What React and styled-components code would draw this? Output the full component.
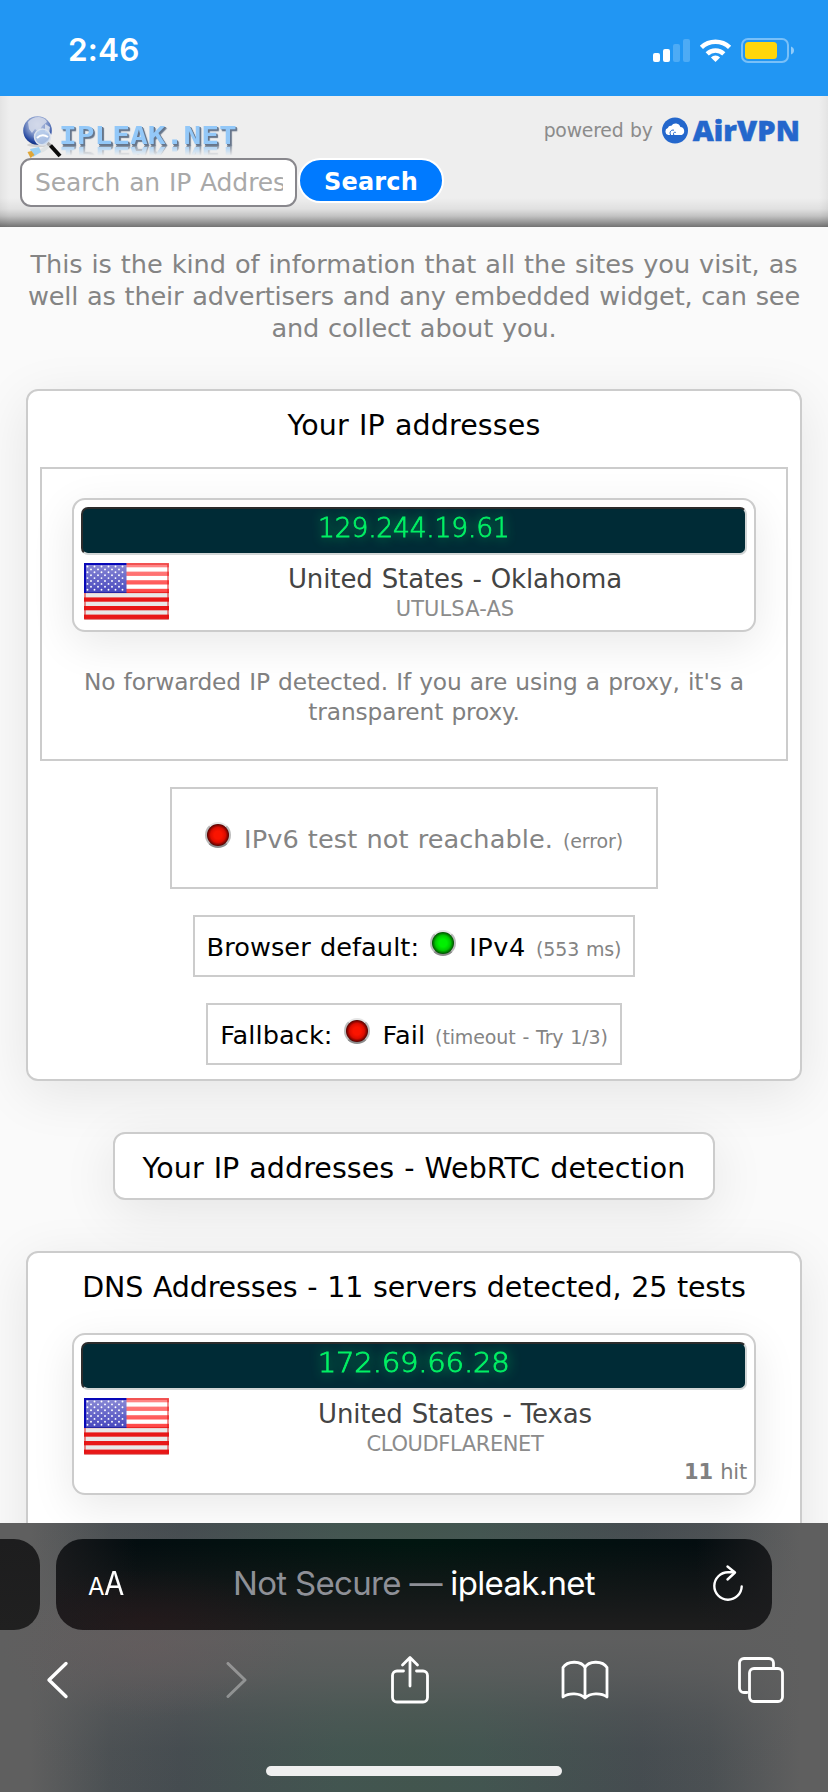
import React from "react";
import styled, { createGlobalStyle } from "styled-components";

const GlobalStyle = createGlobalStyle`
  *, *::before, *::after { box-sizing: border-box; }
  body {
    margin: 0;
    background: #fafafa;
    font-family: Verdana, "DejaVu Sans", sans-serif;
    letter-spacing: -0.2px;
    word-spacing: 0.9px;
  }
`;

const Screen = styled.div`
  width: 828px;
  height: 1792px;
  display: flex;
  flex-direction: column;
  overflow: hidden;
`;

/* Run of text with its own tracking, in px */
const Track = styled.span`
  letter-spacing: ${(p) => p.$by}px;
`;

/* ---------- status bar ---------- */

const StatusBar = styled.div`
  flex: none;
  height: 96px;
  padding: 4px 34px 0 68px;
  display: flex;
  align-items: center;
  justify-content: space-between;
  background: #2196f3;
  color: #fff;
`;

const Clock = styled.span`
  font: 600 31.5px/40px Inter, sans-serif;
  letter-spacing: 0.2px;
`;

const StatusIcons = () => (
  <svg width="142" height="26" viewBox="652 36 142 26" fill="#fff">
    <rect x="653" y="52" width="7" height="9" rx="2" />
    <rect x="663" y="48" width="7" height="13" rx="2" />
    <rect x="673" y="43" width="7" height="18" rx="2" opacity="0.2" />
    <rect x="683" y="38" width="7" height="23" rx="2" opacity="0.2" />
    <path d="M715.500 61l-4.600-4.600a6.600 6.600 0 0 1 9.200 0z" />
    <path d="M707.200 52.800a12 12 0 0 1 16.600 0" fill="none" stroke="#fff" strokeWidth="4.600" />
    <path d="M701.400 46.400a20.400 20.400 0 0 1 28.200 0" fill="none" stroke="#fff" strokeWidth="4.600" />
    <rect x="742" y="38" width="46" height="23" rx="6" fill="none" stroke="#fff" strokeWidth="2" opacity="0.4" />
    <rect x="745" y="41" width="32" height="17" rx="3.500" fill="#ffd60a" />
    <path d="M791 45.500c4 1.200 4 6.800 0 8z" opacity="0.5" />
  </svg>
);

/* ---------- site header ---------- */

const Header = styled.header`
  flex: none;
  height: 131px;
  padding: 19px 28px 0 20px;
  display: flex;
  justify-content: space-between;
  align-items: flex-start;
  background:
    linear-gradient(to top, rgba(0,0,0,.52) 0, rgba(0,0,0,.36) 5px, rgba(0,0,0,.18) 11px, rgba(0,0,0,.06) 18px, transparent 29px),
    linear-gradient(to right, rgba(0,0,0,.045), transparent 9px),
    linear-gradient(to left, rgba(0,0,0,.045), transparent 9px),
    #eee;
`;

const Brand = styled.div`
  display: flex;
  align-items: flex-start;
  height: 43px;
  padding-left: 2px;
`;

const BrandName = styled.span`
  width: 146px;
  height: 32px;
  margin: 5px 0 0 -3px;
  font: 700 24px/32px "DejaVu Sans Mono", monospace;
  letter-spacing: 0;
  white-space: nowrap;
  color: #93c8f8;
  text-shadow: 1px 1px 0 #66758a, 1.5px 2px 1px #66758a;
  transform: scaleX(1.23);
  transform-origin: left top;
  -webkit-box-reflect: below -13px linear-gradient(transparent 48%, rgba(0,0,0,.75) 78%);
`;

const SearchForm = styled.div`
  display: flex;
  align-items: flex-start;
`;

const SearchInput = styled.input`
  width: 277px;
  height: 49px;
  padding: 0 12px 0 13px;
  border: 2px solid #88878c;
  border-radius: 11px;
  background: #fff;
  font: 25px "DejaVu Sans", sans-serif;
  letter-spacing: -0.1px;
  word-spacing: 1px;
  &::placeholder { color: #a9a9a9; opacity: 1; }
`;

const SearchButton = styled.button`
  width: 146px;
  height: 45px;
  margin-left: 1px;
  padding: 2px 0 0;
  border: 2px solid #fff;
  border-radius: 23px;
  background: #007aff;
  color: #fff;
  font: 700 24px/38px "DejaVu Sans", sans-serif;
  letter-spacing: 0.2px;
`;

const Powered = styled.div`
  display: flex;
  align-items: center;
  padding-top: 2px;
  height: 28px;
  color: #8b8b8b;
  font-size: 18.8px;
  svg { margin: 0 5px 0 9px; }
`;

const AirVpn = styled.b`
  color: #2467cc;
  font: 800 29px/28px "Open Sans", sans-serif;
  letter-spacing: 0.1px;
  -webkit-text-stroke: 0.5px #2467cc;
`;

const Globe = () => (
  <svg width="40" height="43" viewBox="22 115 40 43">
    <defs>
      <radialGradient id="globe" cx="0.5" cy="0.3" r="0.72">
        <stop offset="0" stopColor="#c5cfe8" />
        <stop offset="0.5" stopColor="#7e94c8" />
        <stop offset="0.85" stopColor="#1f429c" />
        <stop offset="1" stopColor="#0d2b78" />
      </radialGradient>
    </defs>
    <ellipse cx="39" cy="145" rx="12" ry="2" fill="#000" opacity="0.12" />
    <circle cx="37.500" cy="130.500" r="14.300" fill="url(#globe)" />
    <path d="M28 122q4-5 11-5 7 1 8 5l-5 4-3 6-4-3-3 4-3-4z" fill="#d5daea" opacity="0.85" />
    <path d="M45 124l5 3-1 7-4-2z" fill="#e5e8f0" opacity="0.8" />
    <path d="M34 152q9 0 14-6" stroke="#dfe3e4" strokeWidth="4" fill="none" />
    <path d="M30 149l9-2 2 5-8 5z" fill="#9bd0f3" />
    <path d="M27.500 152l4-1 3 4-4 3z" fill="#dfa637" />
    <circle cx="42.500" cy="137" r="8" fill="#bfd3ee" fillOpacity="0.85" stroke="#dce3ed" strokeWidth="1.500" />
    <path d="M37 138q5-5 11-1" stroke="#fff" strokeWidth="2" fill="none" />
    <path d="M47.500 143l4 3.500" stroke="#aaa" strokeWidth="3" />
    <path d="M50.500 145.500l9.500 10.500" stroke="#0b0b0b" strokeWidth="4" />
  </svg>
);

const CloudBadge = () => (
  <svg width="26" height="27" viewBox="0 0 26 27">
    <circle cx="13" cy="13.500" r="13" fill="#2467cc" />
    <path d="M6.200 18a3.600 3.600 0 0 1-.4-6.900 3.400 3.400 0 0 1 3.600-2.300 5 5 0 0 1 9 1.300 4.100 4.100 0 0 1 1.200 7.900z" fill="#fff" />
    <path d="M8.600 18c-1.600-3 .6-5.600 3.400-4.800M11.800 18c-1-2 .4-3.200 2-2.600" fill="none" stroke="#2467cc" strokeWidth="1" />
  </svg>
);

/* ---------- page ---------- */

const Page = styled.main`
  flex: 1;
  min-height: 0;
  overflow: hidden;
  display: flex;
  flex-direction: column;
  align-items: center;
  background: #fafafa;
`;

const Intro = styled.p`
  flex: none;
  margin: 21px 0 45px;
  font-size: 25.6px;
  line-height: 32px;
  text-align: center;
  white-space: nowrap;
  color: #848484;
`;

const Card = styled.section`
  flex: none;
  width: ${(p) => p.$width || 776}px;
  height: ${(p) => p.$height}px;
  margin-bottom: 51px;
  padding: 18px 12px 0;
  display: flex;
  flex-direction: column;
  align-items: center;
  border: 2px solid #ccc;
  border-radius: 12px;
  background: #fff;
  box-shadow: 0 12px 54px rgba(0, 0, 0, 0.09);
`;

const CardTitle = styled.h2`
  flex: none;
  margin: 0 0 ${(p) => p.$gap || 0}px;
  font-size: 28.5px;
  font-weight: 400;
  line-height: 34px;
  white-space: nowrap;
  color: #000;
`;

const ResultBox = styled.div`
  flex: none;
  width: 748px;
  height: 294px;
  padding-top: 29px;
  display: flex;
  flex-direction: column;
  align-items: center;
  border: 2px solid #ccc;
`;

const AddressCard = styled.article`
  flex: none;
  width: 684px;
  height: ${(p) => p.$height}px;
  padding: 7px;
  border: 2px solid #ccc;
  border-radius: 13px;
  background: #fff;
  box-shadow: 0 12px 44px rgba(0, 0, 0, 0.09);
`;

const AddressBar = styled.div`
  display: flex;
  justify-content: center;
  height: 48px;
  width: 666px;
  border: 2px solid;
  border-color: #2c2c2c #d2d6d6 #d2d6d6 #2c2c2c;
  border-radius: 7px;
  background: #002b36;
`;

const Digits = styled.span`
  color: #00f064;
  font-family: "DejaVu Sans";
  font-weight: 200;
  font-size: 26px;
  line-height: 39px;
  letter-spacing: -0.2px;
  -webkit-text-stroke: 0.8px #00f064;
  text-shadow: 0 0 12px #00f064;
  transform: scaleX(${(p) => p.$stretch});
`;

const Place = styled.div`
  display: flex;
  padding: 8px 6px 0 3px;
`;

const PlaceText = styled.div`
  flex: 1;
  padding-top: 1px;
  display: flex;
  flex-direction: column;
  align-items: center;
`;

const Country = styled.span`
  font-size: 26px;
  line-height: 30px;
  letter-spacing: -0.12px;
  color: #444;
`;

const Network = styled.span`
  margin-top: 2px;
  font-size: 21px;
  line-height: 26px;
  letter-spacing: ${(p) => p.$track}px;
  color: #8c8c8c;
`;

const Hits = styled.div`
  margin-top: 2px;
  font-size: 21px;
  line-height: 26px;
  text-align: right;
  color: #808080;
`;

const Note = styled.p`
  margin: 35px 0 0;
  font-size: 23.3px;
  line-height: 30px;
  letter-spacing: -0.12px;
  text-align: center;
  white-space: nowrap;
  color: #808080;
`;

const TestRow = styled.div`
  flex: none;
  width: ${(p) => p.$width}px;
  height: ${(p) => p.$height}px;
  margin-top: 26px;
  padding-top: 1px;
  display: flex;
  align-items: center;
  justify-content: center;
  border: 2px solid #ccc;
  font-size: 25.6px;
  line-height: 32px;
  letter-spacing: 0.07px;
  white-space: nowrap;
  color: ${(p) => (p.$muted ? "#848484" : "#000")};
`;

const Led = styled.i`
  width: 26px;
  height: 26px;
  margin: -8px 13px 0 ${(p) => (p.$first ? 0 : 11)}px;
  border-radius: 50%;
  border: 2px solid;
  border-color: #e6e6e6 #bbb #8c8c8c #bbb;
  background: ${(p) =>
    p.$on
      ? "radial-gradient(circle, #00f000 0 25%, #00c800 48%, #003a00 74%)"
      : "radial-gradient(circle, #fa1400 0 25%, #dc0c00 48%, #3c0000 74%)"};
`;

const Detail = styled.small`
  margin-left: 10px;
  padding-top: 5px;
  font-size: 19px;
  line-height: 28px;
  letter-spacing: -0.12px;
  color: #848484;
`;

const FlagSvg = styled.svg`
  flex: none;
  width: 85px;
  height: 57px;
`;

const Flag = () => {
  const stars = [];
  for (let r = 0; r < 9; r++) {
    const n = r % 2 ? 5 : 6;
    for (let c = 0; c < n; c++) {
      stars.push(<circle key={`${r}-${c}`} cx={3.5 + c * 7 + (r % 2 ? 3.5 : 0)} cy={3.5 + r * 2.9} r="0.95" />);
    }
  }
  return (
    <FlagSvg viewBox="0 0 85 57">
      <defs>
        <linearGradient id="gloss" x1="0" y1="0" x2="0" y2="1">
          <stop offset="0" stopColor="#fff" stopOpacity="0.5" />
          <stop offset="0.5" stopColor="#fff" stopOpacity="0.2" />
          <stop offset="0.53" stopColor="#000" stopOpacity="0.09" />
          <stop offset="1" stopColor="#000" stopOpacity="0.09" />
        </linearGradient>
      </defs>
      <rect width="85" height="57" fill="#fff" />
      {[0, 1, 2, 3, 4, 5, 6].map((i) => (
        <rect key={i} y={i * 8.6} width="85" height="4.300" fill="#ff1a1a" />
      ))}
      <rect width="42.500" height="30" fill="#1c1cae" />
      <g fill="#fff">{stars}</g>
      <rect width="85" height="57" fill="url(#gloss)" />
      <path d="M1 30V1h41.500" fill="none" stroke="#0808b8" strokeWidth="2" />
      <path d="M42.500 1H84v55H1V30" fill="none" stroke="#e01010" strokeWidth="1.600" opacity="0.6" />
    </FlagSvg>
  );
};

const AddressEntry = ({ height, ip, stretch, country, network, networkTrack, hits }) => (
  <AddressCard $height={height}>
    <AddressBar>
      <Digits $stretch={stretch}>{ip}</Digits>
    </AddressBar>
    <Place>
      <Flag />
      <PlaceText>
        <Country>{country}</Country>
        <Network $track={networkTrack}>{network}</Network>
      </PlaceText>
    </Place>
    {hits && (
      <Hits>
        <b>{hits}</b> hit
      </Hits>
    )}
  </AddressCard>
);

/* ---------- browser toolbar ---------- */

const Toolbar = styled.footer`
  flex: none;
  height: 269px;
  padding-top: 16px;
  background:
    radial-gradient(ellipse 150px 70px at 150px 125px, rgba(104,90,92,.45), transparent),
    linear-gradient(
      rgba(95,95,95,0) 0, rgba(95,95,95,.12) 20px, rgba(95,95,95,.9) 95px, rgba(95,95,95,.94) 118px,
      rgba(95,95,95,.75) 150px, rgba(95,95,95,.3) 190px, rgba(95,95,95,.05) 225px, rgba(95,95,95,0) 269px
    ),
    linear-gradient(
      to right, #5f5f5f 30px, #4b5053 110px, #454c50 180px, #425550 340px, #42554e 414px,
      #425550 480px, #454c50 640px, #4b5053 710px, #5f5f5f 800px
    );
`;

const Tabs = styled.div`
  display: flex;
  height: 91px;
  gap: 16px;
`;

const PreviousTab = styled.div`
  width: 40px;
  border-radius: 0 26px 26px 0;
  background: linear-gradient(#1d1d1e, #202020);
`;

const LocationBar = styled.div`
  width: 716px;
  padding: 0 28px 3px 32px;
  display: flex;
  align-items: center;
  border-radius: 27px;
  background:
    radial-gradient(ellipse 150px 50px at 90px 80px, rgba(44,22,26,.4), transparent),
    linear-gradient(90deg, rgba(28,28,30,.85), rgba(28,28,30,0) 80px 640px, rgba(28,28,30,.85)),
    linear-gradient(rgba(29,29,29,0) 5%, #1d1d1d 95%),
    radial-gradient(ellipse 300px 140px at 50% 0, #011610, #040d10);
  font-family: Inter, sans-serif;
  word-spacing: 0;
  color: #fff;
`;

const TextSize = styled.span`
  display: flex;
  align-items: baseline;
  margin-top: 4px;
  width: 44px;
  font-size: 32px;
  line-height: 40px;
  small { font-size: 24px; }
  span { transform: scaleX(0.92); transform-origin: left; }
`;

const Address = styled.span`
  flex: 1;
  margin-right: 16px;
  text-align: center;
  font-size: 33px;
  line-height: 40px;
  letter-spacing: -0.68px;
  white-space: nowrap;
  em { font-style: normal; color: #8e9097; }
`;

const NavRow = styled.nav`
  height: 96px;
  margin-top: 2px;
  padding-left: 44px;
  display: grid;
  grid-template-columns: 180px 165px 171px 177px 48px;
  align-items: center;
`;

const HomeIndicator = styled.div`
  width: 296px;
  height: 10px;
  margin: 38px auto 0;
  border-radius: 5px;
  background: #efefef;
`;

const Icon = ({ w, h, children, width = 2.8, opacity = 1 }) => (
  <svg
    width={w}
    height={h}
    viewBox={`0 0 ${w} ${h}`}
    fill="none"
    stroke="#fff"
    strokeWidth={width}
    strokeLinecap="round"
    strokeLinejoin="round"
    opacity={opacity}
  >
    {children}
  </svg>
);

export default function App() {
  return (
    <Screen>
      <GlobalStyle />
      <StatusBar>
        <Clock>2:46</Clock>
        <StatusIcons />
      </StatusBar>

      <Header>
        <div>
          <Brand>
            <Globe />
            <BrandName>IPLEAK.NET</BrandName>
          </Brand>
          <SearchForm>
            <SearchInput placeholder="Search an IP Address or hostname" />
            <SearchButton>Search</SearchButton>
          </SearchForm>
        </div>
        <Powered>
          <span>powered by</span>
          <CloudBadge />
          <AirVpn>AirVPN</AirVpn>
        </Powered>
      </Header>

      <Page>
        <Intro>
          <Track $by={-0.05}>This is the kind of information that all the sites you visit, as</Track>
          <br />
          <Track $by={-0.17}>well as their advertisers and any embedded widget, can see</Track>
          <br />
          <Track $by={-0.13}>and collect about you.</Track>
        </Intro>

        <Card $height={692}>
          <CardTitle $gap={24}>
            <Track $by={0.13}>Your IP addresses</Track>
          </CardTitle>
          <ResultBox>
            <AddressEntry
              height={134}
              ip="129.244.19.61"
              stretch={1.02}
              country="United States - Oklahoma"
              network="UTULSA-AS"
              networkTrack={0.1}
            />
            <Note>
              No forwarded IP detected. If you are using a proxy, it's a
              <br />
              transparent proxy.
            </Note>
          </ResultBox>
          <TestRow $width={488} $height={102} $muted>
            <Led $first />
            <span>IPv6 test not reachable.</span>
            <Detail>(error)</Detail>
          </TestRow>
          <TestRow $width={442} $height={62}>
            <span>Browser default:</span>
            <Led $on />
            <Track $by={0.6}>IPv4</Track>
            <Detail>(553 ms)</Detail>
          </TestRow>
          <TestRow $width={416} $height={62}>
            <span>Fallback:</span>
            <Led />
            <span>Fail</span>
            <Detail>(timeout - Try 1/3)</Detail>
          </TestRow>
        </Card>

        <Card $width={602} $height={68}>
          <CardTitle>
            <Track $by={0.05}>Your IP addresses - WebRTC detection</Track>
          </CardTitle>
        </Card>

        <Card $height={400}>
          <CardTitle $gap={28}>
            <Track $by={-0.15}>DNS Addresses - 11 servers detected, 25 tests</Track>
          </CardTitle>
          <AddressEntry
            height={162}
            ip="172.69.66.28"
            stretch={1.12}
            country="United States - Texas"
            network="CLOUDFLARENET"
            networkTrack={-0.4}
            hits="11"
          />
        </Card>
      </Page>

      <Toolbar>
        <Tabs>
          <PreviousTab />
          <LocationBar>
            <TextSize>
              <small>A</small>
              <span>A</span>
            </TextSize>
            <Address>
              <em>Not Secure — </em>ipleak.net
            </Address>
            <Icon w={32} h={38} width={2.4}>
              <path d="M29.700 22.500A13.700 13.700 0 1 1 16 8.300h6" />
              <path d="M15.500 2.500l7.500 6-7.500 7" />
            </Icon>
          </LocationBar>
        </Tabs>
        <NavRow>
          <Icon w={26} h={40} width={3.4}>
            <path d="M22 3.500L5 20l17 16.500" />
          </Icon>
          <Icon w={26} h={40} width={3} opacity={0.35}>
            <path d="M4 3.500L21 20 4 36.500" />
          </Icon>
          <Icon w={42} h={50}>
            <path d="M14.500 16H8a4.500 4.500 0 0 0-4.500 4.500v22A4.500 4.500 0 0 0 8 47h26a4.500 4.500 0 0 0 4.500-4.500v-22A4.500 4.500 0 0 0 34 16h-6.500" />
            <path d="M21 31V3M13.500 10L21 2.500 28.500 10" />
          </Icon>
          <Icon w={50} h={42}>
            <path d="M25 39C20 34 9 33.500 3 38V8.500C7 2 21 1 25 8.500 29 1 43 2 47 8.500V38c-6-4.500-17-4-22 1zM25 8.500V39" />
          </Icon>
          <Icon w={48} h={46}>
            <path d="M10 35.500H7A4.500 4.500 0 0 1 2.500 31V6A4.500 4.500 0 0 1 7 1.500h25A4.500 4.500 0 0 1 36.500 6v3.500" />
            <rect x="12.500" y="11.500" width="33" height="33" rx="4.500" />
          </Icon>
        </NavRow>
        <HomeIndicator />
      </Toolbar>
    </Screen>
  );
}
